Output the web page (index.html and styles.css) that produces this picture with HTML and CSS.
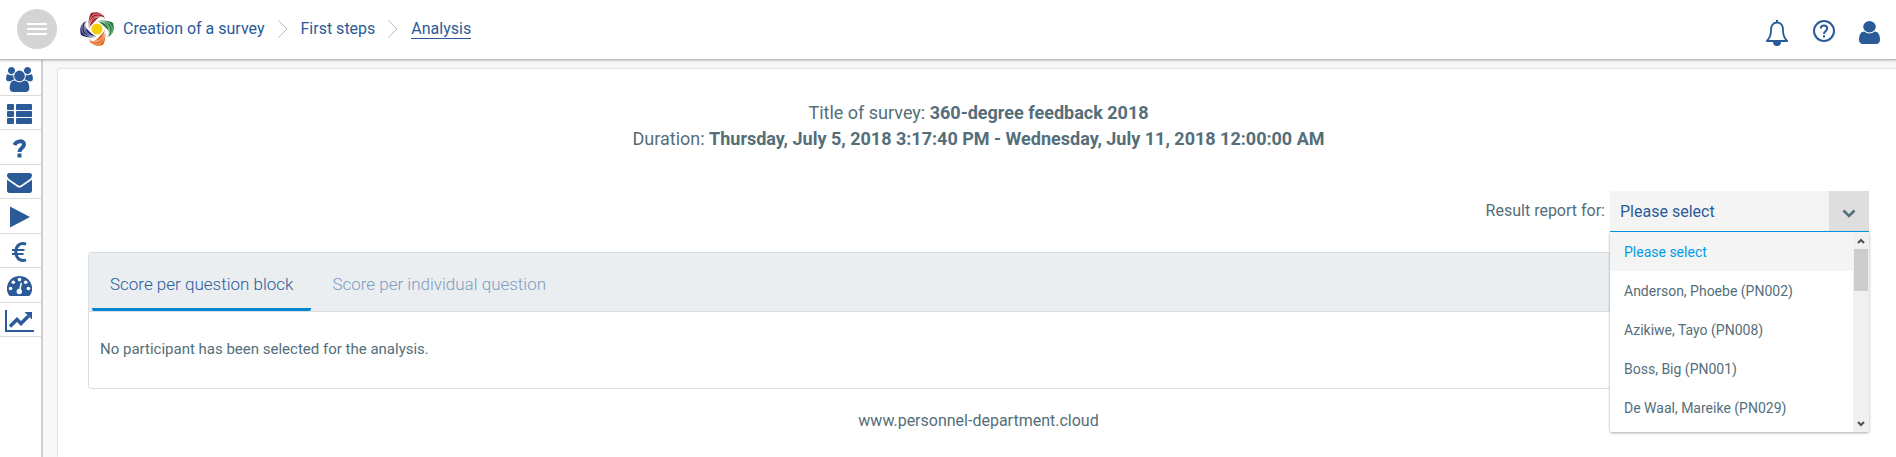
FILE: index.html
```
<!DOCTYPE html>
<html lang="en">
<head>
    <meta charset="UTF-8">
    <meta name="viewport" content="width=device-width, initial-scale=1.0">
    <title>Analysis</title>
    <link rel="stylesheet" href="styles.css">
</head>
<body>
    <header class="topbar">
        <button type="button" class="menu-button" aria-label="Menu">
            <svg width="20" height="12" viewBox="0 0 20 12"><path d="M0 1h20M0 6h20M0 11h20" stroke="#fff" stroke-width="2"/></svg>
        </button>
        <a href="#" class="logo" aria-label="Home">
            <svg width="34" height="34" viewBox="-17 -17 34 34">
                <defs>
                    <g id="wing">
                        <path d="M-8-1C-9-7-8-13-6-16C0-18 7-16 8-10C5-13 2-12 0-10C-3-7-6-4-8-1z"/>
                        <path d="M-8-2C-7-10-3-16 8-11M-8-2C-6-9-2-14 7-11M-8-2C-8-11-5-18 6-14" fill="none" stroke="#fff" stroke-width=".5"/>
                    </g>
                </defs>
                <use href="#wing" fill="#a31f24"/>
                <use href="#wing" fill="#1f7a38" transform="rotate(90)"/>
                <use href="#wing" fill="#e0661c" transform="rotate(180)"/>
                <use href="#wing" fill="#25286b" transform="rotate(270)"/>
                <circle r="5.500" fill="#f3cf0c"/>
            </svg>
        </a>
        <nav class="breadcrumb">
            <a href="#">Creation of a survey</a>
            <svg width="10" height="18" viewBox="0 0 10 18"><path d="M.5.5L9 9L.5 17.500"/></svg>
            <a href="#">First steps</a>
            <svg width="10" height="18" viewBox="0 0 10 18"><path d="M.5.5L9 9L.5 17.500"/></svg>
            <a href="#" class="current">Analysis</a>
        </nav>
        <div class="tools">
            <button type="button" aria-label="Notifications">
                <svg width="24" height="26" viewBox="0 0 24 26">
                    <path d="M12 2.500C7.500 2.500 6 6 6 10C6 15.500 4.500 18.500 1.800 21H22.200C19.500 18.500 18 15.500 18 10C18 6 16.500 2.500 12 2.500z" fill="none" stroke="currentColor" stroke-width="1.800" stroke-linejoin="round"/>
                    <path d="M11 0h2v3h-2zM8 22h8a4 4 0 0 1-8 0z" fill="currentColor"/>
                </svg>
            </button>
            <button type="button" class="help" aria-label="Help">
                <svg width="22" height="22" viewBox="0 0 22 22" fill="none" stroke="currentColor" stroke-width="2">
                    <circle cx="11" cy="11" r="10"/>
                    <path d="M7.800 8.500C7.800 4.500 14.200 4.500 14.200 8.500C14.200 11 11 11 11 14M11 15.300v2.200"/>
                </svg>
            </button>
            <button type="button" class="user" aria-label="Profile">
                <svg width="21" height="23" viewBox="256 128 1280 1536" preserveAspectRatio="none"><path fill="currentColor" d="M1536 1399q0 109-62.500 187t-150.500 78h-854q-88 0-150.500-78t-62.500-187q0-85 8.500-160.500t31.500-152 58.500-131 94-89 134.500-34.500q131 128 313 128t313-128q76 0 134.500 34.500t94 89 58.500 131 31.500 152 8.500 160.500zm-256-887q0 159-112.500 271.500t-271.500 112.500-271.500-112.500-112.500-271.500 112.500-271.500 271.500-112.500 271.500 112.500 112.500 271.500z"/></svg>
            </button>
        </div>
    </header>

    <div class="layout">
        <nav class="sidebar">
            <a href="#" aria-label="Participants">
                <svg width="27" height="25" viewBox="0 0 1920 1792"><path fill="currentColor" d="M593 896q-162 5-265 128h-134q-82 0-138-40.500t-56-118.500q0-353 124-353 6 0 43.500 21t97.500 42.500 119 21.500q67 0 133-23-5 37-5 66 0 139 81 256zm1071 637q0 120-73 189.500t-194 69.500h-874q-121 0-194-69.500t-73-189.500q0-53 3.500-103.500t14-109 26.500-108.500 43-97.500 62-81 85.500-53.500 111.500-20q10 0 43 21.500t73 48 107 48 135 21.500 135-21.500 107-48 73-48 43-21.500q61 0 111.500 20t85.500 53.500 62 81 43 97.500 26.500 108.500 14 109 3.500 103.500zm-1024-1277q0 106-75 181t-181 75-181-75-75-181 75-181 181-75 181 75 75 181zm704 384q0 159-112.500 271.500t-271.500 112.500-271.500-112.500-112.500-271.500 112.500-271.500 271.500-112.500 271.500 112.500 112.500 271.500zm576 225q0 78-56 118.500t-138 40.500h-134q-103-123-265-128 81-117 81-256 0-29-5-66 66 23 133 23 59 0 119-21.500t97.500-42.500 43.500-21q124 0 124 353zm-128-609q0 106-75 181t-181 75-181-75-75-181 75-181 181-75 181 75 75 181z"/></svg>
            </a>
            <a href="#" aria-label="Questions">
                <svg width="25" height="20" viewBox="0 0 25 20" fill="currentColor"><rect width="7" height="6" rx="1"/><rect x="9" width="16" height="6" rx="1"/><rect y="7" width="7" height="6" rx="1"/><rect x="9" y="7" width="16" height="6" rx="1"/><rect y="14" width="7" height="6" rx="1"/><rect x="9" y="14" width="16" height="6" rx="1"/></svg>
            </a>
            <a href="#" aria-label="Help">
                <svg width="14" height="19" viewBox="0 0 14 19" fill="none" stroke="currentColor" stroke-width="4"><path d="M1.500 6C3 2 11 .5 11 5.500C11 9 6.500 9 6.500 13M6.500 14.500v4"/></svg>
            </a>
            <a href="#" aria-label="Messages">
                <svg width="25" height="20" viewBox="0 256 1792 1408" preserveAspectRatio="none"><path fill="currentColor" d="M1792 710v794q0 66-47 113t-113 47h-1472q-66 0-113-47t-47-113v-794q44 49 101 87 362 246 497 345 57 42 92.500 65.500t94.500 48 110 24.500h2q51 0 110-24.500t94.500-48 92.500-65.500q170-123 498-345 57-39 100-87zm0-294q0 79-49 151t-122 123q-376 261-468 325-10 7-42.500 31t-54 38.500-52 32.500-57.500 27-50 9h-2q-23 0-50-9t-57.500-27-52-32.500-54-38.500-42.500-31q-91-64-262-182.500t-205-142.500q-62-42-117-115.500t-55-136.500q0-78 41.500-130t118.500-52h1472q65 0 112.500 47t47.500 113z"/></svg>
            </a>
            <a href="#" aria-label="Start">
                <svg width="20" height="22" viewBox="0 0 20 22"><path d="M0 .5L20 11L0 21.500z" fill="currentColor"/></svg>
            </a>
            <a href="#" aria-label="Billing">
                <svg width="15" height="20" viewBox="0 0 15 20" fill="none" stroke="currentColor"><path d="M14 2.200C8 0 3.800 4 3.800 10S8 20 14 17.800" stroke-width="3"/><path d="M0 8h12.500M0 12h11.500" stroke-width="2"/></svg>
            </a>
            <a href="#" aria-label="Dashboard">
                <svg width="25" height="20" viewBox="0 0 25 20">
                    <path d="M12.500 0A12.500 12.500 0 0 0 1.800 19Q2.300 20 3.500 20H21.500Q22.700 20 23.200 19A12.500 12.500 0 0 0 12.500 0z" fill="currentColor"/>
                    <g fill="#fff"><circle cx="3.600" cy="12.500" r="1.800"/><circle cx="6.300" cy="6.300" r="1.800"/><circle cx="12.500" cy="3.600" r="1.800"/><circle cx="18.700" cy="6.300" r="1.800"/><circle cx="21.400" cy="12.500" r="1.800"/><circle cx="12.300" cy="15.500" r="2.700"/></g>
                    <path d="M12.500 15L14.200 7.500" stroke="#fff" stroke-width="1.600" stroke-linecap="round"/>
                </svg>
            </a>
            <a href="#" aria-label="Analysis">
                <svg width="29" height="22" viewBox="0 0 29 22"><path d="M1 0v21h28" fill="none" stroke="currentColor" stroke-width="2"/><path d="M5 16.500L12 9.500L16 13.500L23.500 6" fill="none" stroke="currentColor" stroke-width="3.500"/><path d="M19.500 2H27v7.500z" fill="currentColor"/></svg>
            </a>
        </nav>

        <main class="page">
            <div class="survey-info">
                <p>Title of survey: <strong>360-degree feedback 2018</strong></p>
                <p>Duration: <strong>Thursday, July 5, 2018 3:17:40 PM - Wednesday, July 11, 2018 12:00:00 AM</strong></p>
            </div>

            <div class="report-row">
                <label for="report">Result report for:</label>
                <div class="dropdown">
                    <select id="report">
                        <option>Please select</option>
                        <option>Anderson, Phoebe (PN002)</option>
                        <option>Azikiwe, Tayo (PN008)</option>
                        <option>Boss, Big (PN001)</option>
                        <option>De Waal, Mareike (PN029)</option>
                    </select>
                    <span class="dropdown-arrow">
                        <svg width="14" height="9" viewBox="0 0 14 9"><path d="M1.500 1.500l5.500 5.500l5.500-5.500" fill="none" stroke="#546e7a" stroke-width="2.500"/></svg>
                    </span>
                    <div class="dropdown-menu">
                        <ul role="listbox" aria-label="Result report for">
                            <li role="option" class="selected" aria-selected="true">Please select</li>
                            <li role="option">Anderson, Phoebe (PN002)</li>
                            <li role="option">Azikiwe, Tayo (PN008)</li>
                            <li role="option">Boss, Big (PN001)</li>
                            <li role="option">De Waal, Mareike (PN029)</li>
                        </ul>
                        <div class="scrollbar">
                            <svg width="8" height="6" viewBox="0 0 8 6"><path d="M1 5l3-3l3 3"/></svg>
                            <span class="thumb"></span>
                            <svg width="8" height="6" viewBox="0 0 8 6"><path d="M1 1l3 3l3-3"/></svg>
                        </div>
                    </div>
                </div>
            </div>

            <section class="panel">
                <div class="tabs" role="tablist">
                    <button type="button" role="tab" class="tab active" aria-selected="true">Score per question block</button>
                    <button type="button" role="tab" class="tab">Score per individual question</button>
                </div>
                <p class="panel-body">No participant has been selected for the analysis.</p>
            </section>

            <footer>www.personnel-department.cloud</footer>
        </main>
    </div>
</body>
</html>
```
FILE: styles.css
```
* {
    box-sizing: border-box;
}
body {
    margin: 0;
    min-height: 100vh;
    display: flex;
    flex-direction: column;
    font-family: Roboto, Arial, sans-serif;
    font-size: 16px;
    color: #546e7a;
    background-color: #f8f8f8;
}
a {
    color: #2a5b98;
    text-decoration: none;
}
p {
    margin: 0;
}
svg {
    display: block;
}
button {
    border: none;
    padding: 0;
    background: none;
    font-family: inherit;
    cursor: pointer;
}

/* top bar */
.topbar {
    position: relative;
    display: flex;
    align-items: center;
    height: 60px;
    padding: 0 16px 2px 17px;
    background-color: #fff;
    border-bottom: 1px solid #bdbdbd;
    box-shadow: 0 1px 2px rgba(0, 0, 0, 0.2);
}
.menu-button {
    display: flex;
    align-items: center;
    justify-content: center;
    width: 40px;
    height: 40px;
    border-radius: 50%;
    background-color: #d4d4d4;
}
.logo {
    margin: 0 9px 0 23px;
}
.breadcrumb {
    display: flex;
    align-items: center;
    gap: 13px;
    line-height: 20px;
}
.breadcrumb svg {
    fill: none;
    stroke: #b0bec5;
}
.breadcrumb a {
    padding-top: 1px;
}
.breadcrumb .current {
    border-bottom: 1px solid #2a5b98;
    line-height: 19px;
}
.tools {
    display: flex;
    align-items: center;
    gap: 24px;
    margin-left: auto;
    padding-top: 8px;
}
.tools button {
    color: #2a5b98;
}
.tools .help {
    padding-bottom: 4px;
}

/* sidebar */
.layout {
    display: flex;
    flex: 1;
}
.sidebar {
    width: 43px;
    padding-top: 1px;
    background-color: #fff;
    border-right: 2px solid #cfcfd2;
}
.sidebar a {
    display: flex;
    align-items: center;
    justify-content: center;
    height: 35px;
    padding: 2px 2px 0 0;
    border-bottom: 1px solid #dcdcdc;
}
.sidebar a:nth-child(even) {
    height: 34px;
}

/* page */
.page {
    flex: 1;
    margin: 9px 0 0 15px;
    padding: 31px 27px 0 30px;
    background-color: #fff;
    border-radius: 3px 0 0 0;
    box-shadow: 0 0 2px rgba(0, 0, 40, 0.25);
}
.survey-info {
    text-align: center;
    font-size: 18px;
    line-height: 26px;
}
.survey-info strong {
    font-weight: 700;
}
.report-row {
    display: flex;
    justify-content: flex-end;
    gap: 5px;
    margin-top: 39px;
    line-height: 39px;
}
.dropdown {
    position: relative;
    width: 259px;
}
.dropdown select {
    appearance: none;
    display: block;
    width: 100%;
    height: 41px;
    padding: 0 50px 0 10px;
    border: none;
    border-bottom: 1px solid #039be5;
    border-radius: 0;
    background-color: #f4f4f4;
    font-family: inherit;
    font-size: 16px;
    color: #2a5b98;
}
.dropdown-arrow {
    position: absolute;
    top: 0;
    right: 0;
    display: flex;
    align-items: center;
    justify-content: center;
    width: 40px;
    height: 40px;
    padding-top: 4px;
    background-color: #dedede;
    pointer-events: none;
}
.dropdown-menu {
    position: absolute;
    top: 100%;
    left: 0;
    right: 0;
    z-index: 1;
    display: flex;
    height: 200px;
    background-color: #fff;
    border-radius: 0 0 2px 2px;
    box-shadow: 0 1px 3px rgba(0, 0, 0, 0.35);
    overflow: hidden;
}
.dropdown-menu ul {
    flex: 1;
    margin: 0;
    padding: 0;
    list-style: none;
    font-size: 14px;
}
.dropdown-menu li {
    height: 39px;
    padding: 0 14px;
    line-height: 40px;
}
.dropdown-menu .selected {
    color: #039be5;
    background-color: #f4f4f4;
}
.scrollbar {
    display: flex;
    flex-direction: column;
    align-items: center;
    width: 16px;
    padding: 6px 0 5px;
    background-color: #f0f0f0;
}
.scrollbar svg {
    fill: none;
    stroke: #505050;
    stroke-width: 2;
}
.scrollbar .thumb {
    width: 14px;
    height: 42px;
    margin: 5px 0 auto;
    background-color: #cdcdcd;
}

/* result panel */
.panel {
    margin-top: 20px;
    border: 1px solid #dcdfe1;
    border-radius: 3px;
}
.tabs {
    display: flex;
    gap: 3px;
    height: 59px;
    padding: 0 3px;
    background-color: #eaeef1;
    border-bottom: 1px solid #dcdfe1;
}
.tab {
    padding: 7px 18px 0;
    border-bottom: 3px solid transparent;
    border-radius: 2px;
    font-size: 17px;
    font-weight: 300;
    color: #7f9cc0;
}
.tab.active {
    color: #2a5b98;
    border-bottom-color: #0288d1;
}
.panel-body {
    padding: 27px 11px 29px;
    font-size: 15px;
    line-height: 20px;
}
footer {
    padding: 22px 0;
    text-align: center;
    line-height: 20px;
}
```
